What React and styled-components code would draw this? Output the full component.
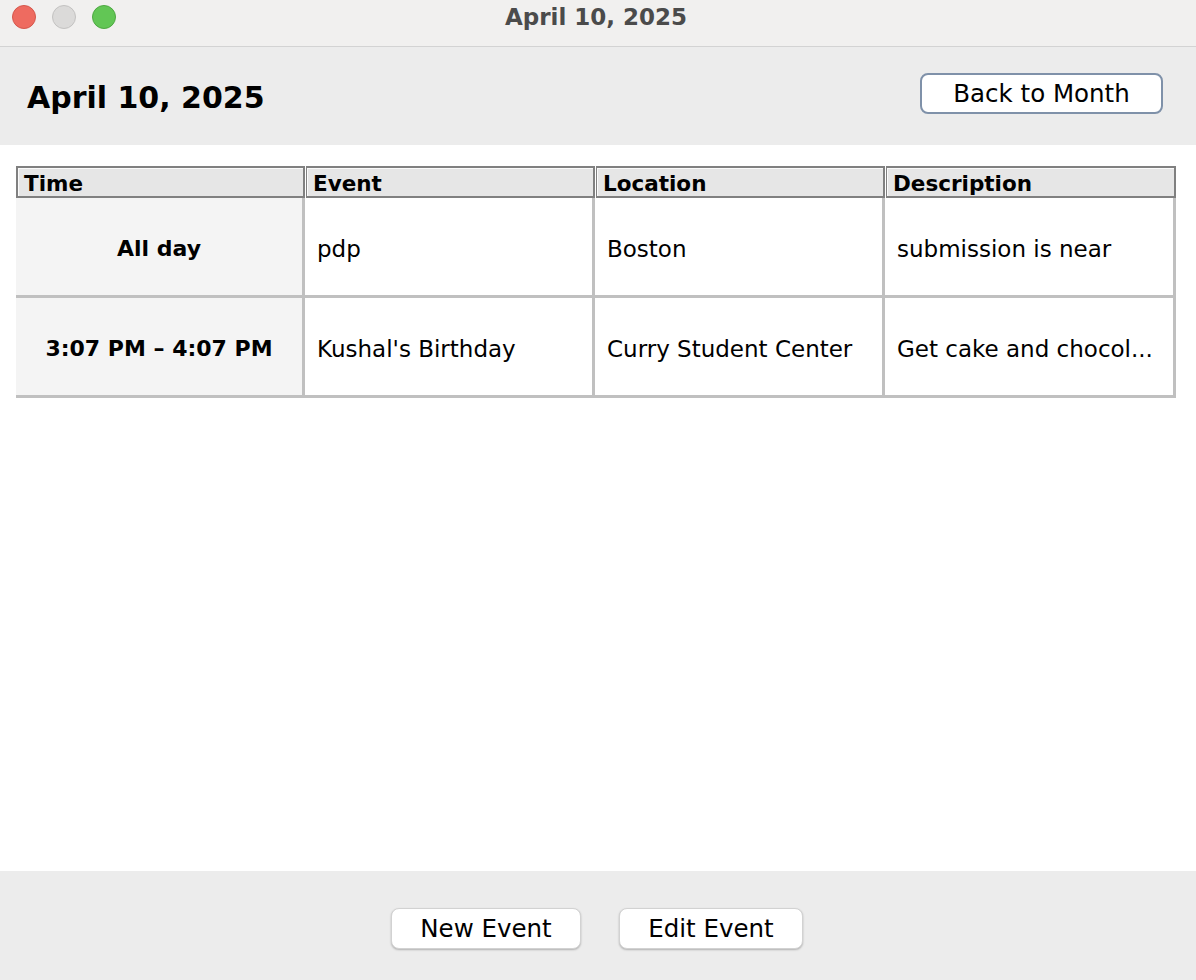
import React from 'react';
import styled, { createGlobalStyle } from 'styled-components';

const GlobalStyle = createGlobalStyle`
  html, body {
    margin: 0;
    padding: 0;
    background: #ffffff;
  }
  body {
    font-family: 'DejaVu Sans', 'Liberation Sans', sans-serif;
    color: #000;
  }
`;

const Window = styled.div`
  width: 1196px;
  height: 980px;
  display: flex;
  flex-direction: column;
  overflow: hidden;
`;

const TitleBar = styled.div`
  height: 46px;
  flex: none;
  background: #f1f0ef;
  border-bottom: 1px solid #d3d3d3;
  display: flex;
  align-items: flex-start;
  position: relative;
`;

const Lights = styled.div`
  display: flex;
  gap: 16px;
  padding: 5px 0 0 12px;
`;

const Light = styled.span`
  width: 24px;
  height: 24px;
  border-radius: 50%;
  box-sizing: border-box;
  background: ${(p) => p.$fill};
  border: 1px solid ${(p) => p.$edge};
`;

const WindowTitle = styled.div`
  position: absolute;
  left: 0;
  right: 4px;
  top: 4px;
  text-align: center;
  font-size: 23px;
  font-weight: bold;
  color: #4b4b4b;
  pointer-events: none;
`;

const Header = styled.div`
  height: 98px;
  flex: none;
  background: #ececec;
  display: flex;
  align-items: center;
  justify-content: space-between;
  padding: 0 33px 0 27px;
`;

const DayTitle = styled.h1`
  margin: 0;
  font-size: 30px;
  font-weight: bold;
  padding-top: 2px;
`;

const Button = styled.button`
  font-family: 'DejaVu Sans', 'Liberation Sans', sans-serif;
  font-size: 24.5px;
  color: #000;
  background: #ffffff;
  height: 41px;
  width: ${(p) => p.$w}px;
  border-radius: 8px;
  cursor: pointer;
  border: ${(p) => (p.$focused ? '2px solid #7f91a9' : '1px solid #d2d2d2')};
  box-shadow: ${(p) => (p.$focused ? 'none' : '0 1px 2px rgba(0,0,0,0.25)')};
  padding: 0;
  margin-bottom: ${(p) => (p.$focused ? 5 : 0)}px;
`;

const Content = styled.div`
  flex: 1;
  background: #ffffff;
  padding: 21px 20px 0 16px;
`;

const Grid = styled.div`
  display: grid;
  grid-template-columns: 289px 290px 290px 291px;
  width: 1160px;
`;

const HeadCell = styled.div`
  height: 32px;
  box-sizing: border-box;
  background: #e6e6e6;
  border: 2px solid #808080;
  border-left-width: ${(p) => (p.$first ? 2 : 1)}px;
  box-shadow: inset 1px 1px 0 #fafafa;
  font-size: 21.5px;
  font-weight: bold;
  line-height: 32px;
  padding-left: 6px;
  ${(p) => !p.$first && 'margin-left: 1px;'}
`;

const Cell = styled.div`
  height: 100px;
  box-sizing: border-box;
  border-right: 3px solid #c0c0c0;
  border-bottom: 3px solid #c0c0c0;
  display: flex;
  align-items: center;
  font-size: ${(p) => (p.$time ? 22 : 23)}px;
  white-space: nowrap;
  overflow: hidden;
  padding: ${(p) => (p.$time ? '4px 0 0' : '4px 12px 0')};
  justify-content: ${(p) => (p.$time ? 'center' : 'flex-start')};
  background: ${(p) => (p.$time ? '#f4f4f4' : '#ffffff')};
  font-weight: ${(p) => (p.$time ? 'bold' : 'normal')};
`;

const Footer = styled.div`
  height: 109px;
  flex: none;
  background: #ececec;
  display: flex;
  justify-content: center;
  align-items: center;
  gap: 38px;
  padding: 6px 2px 0 0;
  box-sizing: border-box;
`;

const columns = ['Time', 'Event', 'Location', 'Description'];

const events = [
  { time: 'All day', title: 'pdp', location: 'Boston', description: 'submission is near' },
  {
    time: '3:07 PM – 4:07 PM',
    title: "Kushal's Birthday",
    location: 'Curry Student Center',
    description: 'Get cake and chocol...',
  },
];

const App = () => (
  <Window>
    <GlobalStyle />
    <TitleBar>
      <Lights>
        <Light $fill="#ee6b60" $edge="#d5574c" />
        <Light $fill="#dbdad9" $edge="#c3c2c1" />
        <Light $fill="#62c655" $edge="#4ea842" />
      </Lights>
      <WindowTitle>April 10, 2025</WindowTitle>
    </TitleBar>
    <Header>
      <DayTitle>April 10, 2025</DayTitle>
      <Button $focused $w={243}>Back to Month</Button>
    </Header>
    <Content>
      <Grid>
        {columns.map((c, i) => (
          <HeadCell key={c} $first={i === 0}>
            {c}
          </HeadCell>
        ))}
        {events.map((ev, i) => (
          <React.Fragment key={i}>
            <Cell $time>{ev.time}</Cell>
            <Cell>{ev.title}</Cell>
            <Cell>{ev.location}</Cell>
            <Cell>{ev.description}</Cell>
          </React.Fragment>
        ))}
      </Grid>
    </Content>
    <Footer>
      <Button $w={190}>New Event</Button>
      <Button $w={184}>Edit Event</Button>
    </Footer>
  </Window>
);

export default App;
